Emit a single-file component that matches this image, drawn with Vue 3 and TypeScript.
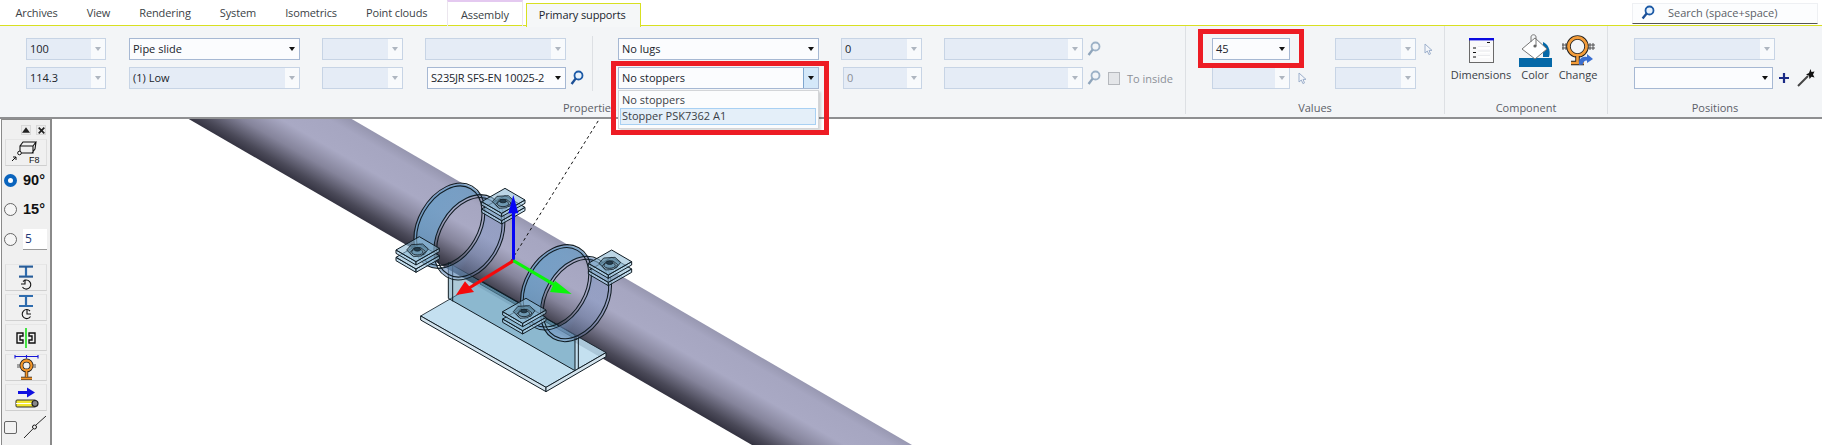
<script setup lang="ts">
function ell(cx: number, cy: number, rx: number, ry: number, rot: number): string {
  const a = (rot * Math.PI) / 180
  const dx = rx * Math.cos(a)
  const dy = rx * Math.sin(a)
  return `M${cx + dx} ${cy + dy}A${rx} ${ry} ${rot} 1 0 ${cx - dx} ${cy - dy}A${rx} ${ry} ${rot} 1 0 ${cx + dx} ${cy + dy}Z`
}
const ringA = { cx: 238, cy: 197 }
const ringB = { cx: 298, cy: 232 }
const bandPath = ell(ringA.cx, ringA.cy, 135, 92, -60) + ell(ringB.cx, ringB.cy, 135, 92, -60)
const rings = [ringA, ringB].flatMap((r) => [
  ell(r.cx, r.cy, 137, 94, -60),
  ell(r.cx, r.cy, 128, 86, -60),
])
const clamps = [
  { t: 'translate(0 0)' },
  { t: 'translate(320 185)' },
]
const lugs = ['translate(78 270)', 'translate(335 125)']
const plates = [22, 0]
const tabs = ['Archives', 'View', 'Rendering', 'System', 'Isometrics', 'Point clouds']
</script>

<template>
  <div class="page">
    <header class="ribbon">
      <nav class="tabstrip">
        <span v-for="t in tabs" :key="t" class="tab">{{ t }}</span>
        <span class="tab assembly">Assembly</span>
        <span class="tab primary">Primary supports</span>
        <div class="search">
          <svg class="search-ico" width="14" height="15" viewBox="0 0 14 15"><circle cx="8.5" cy="5.5" r="4" fill="#e8f2fc" stroke="#1c5aa6" stroke-width="1.8"/><path d="M5.6 8.6 1.6 13.4" stroke="#1c4f96" stroke-width="2.4"/></svg>
          <span>Search (space+space)</span>
        </div>
      </nav>

      <div class="body">
        <section class="group g-props">
          <div class="cols">
            <div class="col c1">
              <div class="combo off"><span class="val">100</span><span class="arr"></span></div>
              <div class="combo off"><span class="val">114.3</span><span class="arr"></span></div>
            </div>
            <div class="col c2">
              <div class="combo"><span class="val">Pipe slide</span><span class="arr"></span></div>
              <div class="combo off"><span class="val">(1) Low</span><span class="arr"></span></div>
            </div>
            <div class="col c3">
              <div class="combo off"><span class="val"></span><span class="arr"></span></div>
              <div class="combo off"><span class="val"></span><span class="arr"></span></div>
            </div>
            <div class="col c4">
              <div class="combo off"><span class="val"></span><span class="arr"></span></div>
              <div class="combo in2 tight"><span class="val">S235JR SFS-EN 10025-2</span><span class="arr"></span></div>
            </div>
            <div class="col c5">
              <span class="ico-slot"></span>
              <span class="ico-slot"><svg width="14" height="16" viewBox="0 0 14 16"><circle cx="8.5" cy="5.5" r="4" fill="#e8f2fc" stroke="#1c5aa6" stroke-width="1.8"/><path d="M5.6 8.6 1.6 14" stroke="#1c4f96" stroke-width="2.4"/></svg></span>
            </div>
            <i class="sep s1"></i>
            <div class="col c6">
              <div class="combo"><span class="val">No lugs</span><span class="arr"></span></div>
              <div class="anchor">
                <div class="combo hot"><span class="val">No stoppers</span><span class="arr"></span></div>
                <div class="menu">
                  <div class="opt">No stoppers</div>
                  <div class="opt sel">Stopper PSK7362 A1</div>
                </div>
                <div class="mark m1"></div>
              </div>
            </div>
            <div class="col c7">
              <div class="combo off"><span class="val">0</span><span class="arr"></span></div>
              <div class="combo off in2 dim"><span class="val">0</span><span class="arr"></span></div>
            </div>
            <div class="col c8">
              <div class="combo off"><span class="val"></span><span class="arr"></span></div>
              <div class="combo off"><span class="val"></span><span class="arr"></span></div>
            </div>
            <div class="col c9">
              <span class="ico-slot"><svg width="14" height="16" viewBox="0 0 14 16"><circle cx="8.5" cy="5.5" r="4" fill="#f2f5f8" stroke="#9db2c7" stroke-width="1.8"/><path d="M5.6 8.6 1.6 14" stroke="#8fa5bb" stroke-width="2.4"/></svg></span>
              <span class="ico-slot inside">
                <svg width="14" height="16" viewBox="0 0 14 16"><circle cx="8.5" cy="5.5" r="4" fill="#f2f5f8" stroke="#9db2c7" stroke-width="1.8"/><path d="M5.6 8.6 1.6 14" stroke="#8fa5bb" stroke-width="2.4"/></svg>
                <i class="chk"></i>
                <span class="inside-txt">To inside</span>
              </span>
            </div>
          </div>
          <div class="glabel lab-props">Properties</div>
        </section>

        <section class="group g-vals">
          <div class="cols">
            <div class="col v1">
              <div class="anchor">
                <div class="combo"><span class="val">45</span><span class="arr"></span></div>
                <div class="mark m2"></div>
              </div>
              <div class="with-cur">
                <div class="combo off"><span class="val"></span><span class="arr"></span></div>
                <svg class="cursor" width="9" height="13" viewBox="0 0 9 13"><path d="M1 1v9l2.3-2 1.6 3.6 1.6-.7L5 7.4h3z" fill="#f4f6fa" stroke="#9db0cc"/></svg>
              </div>
            </div>
            <div class="col v2">
              <div class="with-cur">
                <div class="combo off"><span class="val"></span><span class="arr"></span></div>
                <svg class="cursor" width="9" height="13" viewBox="0 0 9 13"><path d="M1 1v9l2.3-2 1.6 3.6 1.6-.7L5 7.4h3z" fill="#f4f6fa" stroke="#9db0cc"/></svg>
              </div>
              <div class="combo off"><span class="val"></span><span class="arr"></span></div>
            </div>
          </div>
          <div class="glabel">Values</div>
        </section>

        <section class="group g-comp">
          <div class="tools">
            <div class="tool t-dim">
              <span class="tool-ico">
                <svg width="25" height="25" viewBox="0 0 25 25"><rect x=".5" y=".5" width="24" height="24" fill="#f9f9fa" stroke="#6a6a6a"/><rect x="0" y="0" width="25" height="2.4" fill="#0a0ae0"/><path d="M18 4.5h3M4 10h3M4 14.500h3M4 19h3" stroke="#111" stroke-width="1.200"/><path d="M9 10h12M9 14.500h12M9 19h12" stroke="#fff" stroke-width="1.500"/><path d="M9 8.500h12M9 13h12M9 17.500h12" stroke="#e4e6ea" stroke-width=".8"/></svg>
              </span>
              <span class="tool-txt">Dimensions</span>
            </div>
            <div class="tool t-col">
              <span class="tool-ico">
                <svg width="33" height="33" viewBox="0 0 33 33"><rect x="0" y="24" width="33" height="9" fill="#0468a8"/><path d="M24 8c5 2 8 8 6 15h-6z" fill="#0468a8"/><path d="M16 4 28 15 16 25 3 15z" fill="#fff" stroke="#777"/><path d="M12 8V3c0-3 5-3 5 0v9" fill="none" stroke="#777"/><circle cx="16" cy="12" r="1.600" fill="#666"/></svg>
              </span>
              <span class="tool-txt">Color</span>
            </div>
            <div class="tool t-chg">
              <span class="tool-ico">
                <svg width="33" height="31" viewBox="0 0 33 31"><path d="M1 8v7M4 8v7M0 10h6M0 13h6M28 8v7M31 8v7M26 10h7M26 13h7" stroke="#444" stroke-width=".9"/><circle cx="15.500" cy="11.500" r="9" fill="none" stroke="#222" stroke-width="4.500"/><circle cx="15.500" cy="11.500" r="9" fill="none" stroke="#f39c3a" stroke-width="2.800"/><path d="M15.500 21v6M9 28h13" stroke="#222" stroke-width="4.500"/><path d="M15.500 21v6M9 28h13" stroke="#f39c3a" stroke-width="2.600"/><path d="M17 30c-1-6 3-9 8-8v-3l6 5-6 4v-2.500c-3 0-4 2-4 4z" fill="#3b6fd0"/></svg>
              </span>
              <span class="tool-txt">Change</span>
            </div>
          </div>
          <div class="glabel">Component</div>
        </section>

        <section class="group g-pos">
          <div class="cols">
            <div class="col p1">
              <div class="combo off"><span class="val"></span><span class="arr"></span></div>
              <div class="pos-row">
                <div class="combo short"><span class="val"></span><span class="arr"></span></div>
                <svg class="plus" width="10" height="10" viewBox="0 0 10 10"><path d="M5 0v10M0 5h10" stroke="#1a2a86" stroke-width="2.200"/></svg>
                <svg class="wand" width="18" height="18" viewBox="0 0 18 18"><path d="M1 17 11 7" stroke="#444" stroke-width="2"/><path d="M13.500 0l1 3 3-.5-1.500 3 1.500 3-3-.8-2 2.300-.5-3.300-3-1.200 3-1.500z" fill="#111"/></svg>
              </div>
            </div>
          </div>
          <div class="glabel">Positions</div>
        </section>
      </div>
    </header>

    <main class="view">
      <svg class="scene" width="1822" height="326" viewBox="0 119 1822 326">
        <defs>
          <linearGradient id="pipe" gradientUnits="userSpaceOnUse" x1="187" y1="118" x2="228" y2="47">
            <stop offset="0" stop-color="#353442"/>
            <stop offset=".1" stop-color="#4a4958"/>
            <stop offset=".32" stop-color="#85849b"/>
            <stop offset=".56" stop-color="#a9a9c4"/>
            <stop offset=".85" stop-color="#a6a6c1"/>
            <stop offset="1" stop-color="#9595ae"/>
          </linearGradient>
          <linearGradient id="band" gradientUnits="userSpaceOnUse" x1="150" y1="150" x2="400" y2="290">
            <stop offset="0" stop-color="#6f9ec6" stop-opacity=".9"/>
            <stop offset=".45" stop-color="#739dc4" stop-opacity=".85"/>
            <stop offset=".7" stop-color="#7a93c4" stop-opacity=".4"/>
            <stop offset="1" stop-color="#7a93c4" stop-opacity=".4"/>
          </linearGradient>
        </defs>
        <polygon points="187,118 350,118 912,445 752,445" fill="url(#pipe)"/>
        <line x1="511" y1="261" x2="600" y2="118" stroke="#111" stroke-width="1" stroke-dasharray="3 3"/>
        <g transform="translate(370 160) scale(.33333)" stroke="#101c24" stroke-width="3" stroke-linejoin="round">
          <polygon points="152,468 332,364 708,578 528,682" fill="#bcdcee" fill-opacity=".88" stroke-width="2.500"/>
          <polygon points="152,468 528,682 528,695 152,480" fill="#d4e4ee"/>
          <polygon points="528,682 708,578 708,590 528,695" fill="#d4e4ee"/>
          <polygon points="330,360 620,527 620,539 330,372" fill="#2a4555" fill-opacity=".55" stroke-width="2"/>
          <polygon points="235,308 615,525 615,632 235,415" fill="#4a87a6" fill-opacity=".45"/>
          <path d="M248 318V424M625 530V626" fill="none"/>
          <g v-for="c in clamps" :key="c.t" :transform="c.t">
            <path :d="bandPath" fill="url(#band)" fill-rule="evenodd" stroke="none"/>
            <path v-for="r in rings" :key="r" :d="r" fill="none" stroke-width="3.200"/>
            <g v-for="l in lugs" :key="l" :transform="l">
              <g v-for="y in plates" :key="y" :transform="`translate(0 ${y})`">
                <polygon points="0,0 60,35 60,45 0,10" fill="#a9cfe6" fill-opacity=".7"/>
                <polygon points="60,35 130,-5 130,5 60,45" fill="#a9cfe6" fill-opacity=".7"/>
                <polygon points="0,0 70,-40 130,-5 60,35" fill="#8fbbd6" fill-opacity=".6"/>
              </g>
              <polygon points="32,0 46,-16 80,-18 97,-3 84,14 48,16" fill="#4f7890" fill-opacity=".6" stroke-width="2.400"/>
              <polygon points="42,8 54,-6 74,-7 88,4 76,18 52,20" fill="#a9c8dc" fill-opacity=".6" stroke-width="2.400"/>
              <ellipse cx="64" cy="6" rx="17" ry="9" fill="#5f8ba6" fill-opacity=".7" stroke-width="2.400"/>
              <ellipse cx="64" cy="-2" rx="10" ry="5.500" fill="#243c4c" stroke-width="2"/>
            </g>
          </g>
          <g stroke="none">
            <rect x="426" y="155" width="9" height="147" fill="#0606f5"/>
            <polygon points="430,105 415,160 445,160" fill="#0606f5"/>
            <polygon points="428,298 433,306 300,388 295,380" fill="#f50a0a"/>
            <polygon points="258,405 285,364 312,396" fill="#f50a0a"/>
            <polygon points="432,298 428,306 560,384 565,376" fill="#0af50a"/>
            <polygon points="605,402 555,362 540,396" fill="#0af50a"/>
          </g>
        </g>
      </svg>

      <aside class="palette">
        <div class="pal-top">
          <span class="mini"><svg width="9" height="6" viewBox="0 0 9 6"><path d="M4.500 0 9 6H0z" fill="#222"/></svg></span>
          <span class="mini"><svg width="7" height="7" viewBox="0 0 7 7"><path d="M.7.7l5.600 5.600M6.300.7.700 6.300" stroke="#222" stroke-width="1.700"/></svg></span>
        </div>
        <button class="pbtn b-f8">
          <svg width="42" height="26" viewBox="0 0 42 26"><path d="M15 6h13v7H15zM15 6l3-4h13l-3 4M31 2l-1 7-3 4" fill="none" stroke="#111" stroke-width="1.100"/><circle cx="14.500" cy="13" r="1.800" fill="#fff" stroke="#111"/><path d="M7 21l4-4M8 17h3v3" fill="none" stroke="#111"/><text x="24" y="23" class="f8">F8</text></svg>
        </button>
        <label class="radio r90"><i class="dot on"></i><b>90°</b></label>
        <label class="radio r15"><i class="dot"></i><b>15°</b></label>
        <label class="radio r5"><i class="dot"></i><span class="num">5</span></label>
        <button class="pbtn first">
          <svg width="42" height="27" viewBox="0 0 42 27"><path d="M14 2.500h14M14 12.500h14M21 2.500v10" fill="none" stroke="#2f6cae" stroke-width="2.200"/><path d="M14 3h14M14 13h14" stroke="#1a3a66" stroke-width=".6"/><path d="M18 17.500a4.500 4.500 0 1 1-.5 5.500" fill="none" stroke="#111" stroke-width="1.100"/><path d="M20 15.500v4.500h-4" fill="none" stroke="#111" stroke-width="1.100"/></svg>
        </button>
        <button class="pbtn">
          <svg width="42" height="27" viewBox="0 0 42 27"><path d="M14 2h14M14 12h14M21 2v10" fill="none" stroke="#2f6cae" stroke-width="2.200"/><path d="M25 17a4.500 4.500 0 1 0 .5 5.500" fill="none" stroke="#111" stroke-width="1.100"/><path d="M22 15.500v4.500h4" fill="none" stroke="#111" stroke-width="1.100"/></svg>
        </button>
        <button class="pbtn">
          <svg width="42" height="27" viewBox="0 0 42 27"><path d="M21 4v20" stroke="#18e018" stroke-width="1.600"/><path d="M18 9h-6v10h6v-3h-3v-4h3zM24 9h6v10h-6v-3h3v-4h-3z" fill="none" stroke="#111" stroke-width="1.400"/></svg>
        </button>
        <button class="pbtn">
          <svg width="42" height="27" viewBox="0 0 42 27"><path d="M10 2.500h23M10 .5v4M21.500 .5v4M33 .5v4" stroke="#1414d8" stroke-width="1.100"/><path d="M12 11h3M28 11h3M12 13h3M28 13h3" stroke="#555"/><circle cx="21.500" cy="11.500" r="5" fill="none" stroke="#222" stroke-width="3.800"/><circle cx="21.500" cy="11.500" r="5" fill="none" stroke="#f3962a" stroke-width="2.300"/><path d="M21.500 17v6M16 24.500h11" stroke="#222" stroke-width="3.400"/><path d="M21.500 17v6M16 24.500h11" stroke="#f3962a" stroke-width="2"/></svg>
        </button>
        <button class="pbtn">
          <svg width="42" height="27" viewBox="0 0 42 27"><path d="M13 7h9V3.500l8 5-8 5V10h-9z" fill="#1010e0"/><rect x="11" y="16" width="20" height="7" rx="1" fill="#f2e62c" stroke="#333"/><path d="M11 19.500h20" stroke="#fff"/><circle cx="30" cy="19.500" r="3" fill="#888" stroke="#222" stroke-width="1.200"/></svg>
        </button>
        <div class="pal-foot">
          <i class="fchk"></i>
          <svg width="22" height="22" viewBox="0 0 22 22"><path d="M0 22 9 12.800M12 9 22 0" stroke="#111" stroke-width=".9"/><circle cx="10.500" cy="11" r="2" fill="none" stroke="#111"/></svg>
        </div>
      </aside>
    </main>
  </div>
</template>

<style>
html, body { margin: 0; background: #fff; }
</style>

<style scoped>
.page { width: 1822px; height: 445px; overflow: hidden; font-family: "Open Sans", "Liberation Sans", sans-serif; font-size: 11px; color: #20242c; background: #fff; }
.ribbon { height: 119px; box-sizing: border-box; background: #f3f5f7; border-bottom: 2px solid #8e8f91; position: relative; z-index: 2; }
.tabstrip { height: 26px; box-sizing: border-box; display: flex; align-items: flex-end; background: #fff; border-bottom: 1.500px solid #d8e021; position: relative; padding-left: 1px; letter-spacing: -.12px; }
.tab { box-sizing: border-box; height: 24px; padding: 0 14.500px; line-height: 24px; color: #3b3f46; white-space: nowrap; }
.assembly { margin-left: 5px; padding: 0 13px; height: 26px; line-height: 26px; border-top: 2px solid #e4c9f0; border-left: 1px solid #ebe6ee; border-right: 1px solid #ebe6ee; color: #3b3f46; margin-bottom: -1px; }
.primary { margin-left: 3px; padding: 0 14px 0 12px; height: 24px; line-height: 21px; background: #f5f7f8; border: 1.500px solid #d8e021; border-bottom: none; margin-bottom: -1.500px; color: #20242c; position: relative; z-index: 1; }
.search { position: absolute; left: 1632px; top: 3px; width: 186px; height: 21px; box-sizing: border-box; display: flex; align-items: center; padding-bottom: 2px; background: #fcfdfe; border: 1px solid #eef0f3; border-bottom: 1px solid #555; color: #5b5f66; letter-spacing: 0; }
.search-ico { margin: 0 13px 0 8px; }
.body { display: flex; height: 90px; }
.group { position: relative; height: 88px; box-sizing: border-box; padding-top: 12px; flex: none; }
.g-props { width: 1186px; border-right: 1px solid #dde0e4; }
.g-vals { width: 259px; border-right: 1px solid #dde0e4; }
.g-comp { width: 163px; border-right: 1px solid #dde0e4; }
.g-pos { width: 214px; }
.cols { display: flex; }
.col { display: flex; flex-direction: column; gap: 7px; flex: none; }
.combo { box-sizing: border-box; height: 22px; width: 100%; display: flex; align-items: stretch; background: #fbfcfe; border: 1px solid #a6b8d3; }
.val { flex: 1; min-width: 0; padding-left: 3px; line-height: 20px; white-space: nowrap; color: #20242c; }
.arr { width: 14px; flex: none; position: relative; }
.arr::after { content: ""; position: absolute; left: 4px; top: 8px; border: 3px solid transparent; border-top: 4px solid #111; border-bottom: none; }
.off { background: #e5ecf6; border-color: #c7d4e5; }
.off .arr { background: #f8fafc; }
.off .arr::after { border-top-color: #aeb6c0; }
.dim .val { color: #8b8f96; }
.in2 { margin-left: 2px; width: calc(100% - 2px); }
.tight .val { letter-spacing: -.2px; }
.hot { background: #fbfcfe; }
.hot .arr { background: #d4e8f9; border-left: 1px solid #7fa6cf; }
.c1 { margin-left: 26px; width: 80px; }
.c2 { margin-left: 23px; width: 171px; }
.c3 { margin-left: 22px; width: 81px; }
.c4 { margin-left: 22px; width: 141px; }
.c5 { margin-left: 4px; width: 14px; }
.s1 { display: block; width: 1px; height: 55px; background: #dde0e4; margin: -2px 25px 0 8px; flex: none; }
.c6 { width: 201px; }
.c7 { margin-left: 22px; width: 81px; }
.c8 { margin-left: 22px; width: 139px; }
.c9 { margin-left: 4px; }
.ico-slot { height: 22px; display: flex; align-items: center; }
.inside { gap: 7px; }
.chk { display: block; width: 12px; height: 13px; box-sizing: border-box; background: #e4e6e9; border: 1px solid #b5b8bd; }
.inside-txt { color: #8c9098; margin-left: 0; white-space: nowrap; }
.anchor { position: relative; }
.menu { position: absolute; left: 0; right: 0; top: 23px; height: 39px; box-sizing: border-box; padding: 1px; background: #fbfcfd; border: 1px solid #d3d5d8; box-shadow: 2px 2px 2px rgba(0,0,0,.15); z-index: 3; }
.opt { height: 16px; line-height: 15px; padding-left: 2px; color: #3a3e46; box-sizing: border-box; }
.opt.sel { height: 17px; background: #e4eff9; border: 1px solid #a8d0f3; margin-right: 1px; padding-left: 1px; line-height: 14px; }
.mark { position: absolute; border: 5px solid #ed1c24; pointer-events: none; z-index: 4; }
.m1 { left: -7px; right: -10px; top: -6px; bottom: -46px; }
.m2 { left: -14px; right: -14px; top: -9px; bottom: -8px; }
.glabel { position: absolute; left: 0; right: 0; top: 74px; text-align: center; color: #5c6068; line-height: 16px; }
.lab-props { left: 563px; right: auto; width: 50px; }
.g-vals .cols { padding-left: 26px; }
.v1 { width: 78px; }
.v2 { margin-left: 45px; width: 81px; }
.with-cur { position: relative; }
.cursor { position: absolute; left: calc(100% + 8px); top: 5px; }
.tools { display: flex; height: 52px; position: relative; }
.tool { position: absolute; top: 0; display: flex; flex-direction: column; align-items: center; }
.tool-ico { height: 33px; display: flex; align-items: center; margin-top: -4px; }
.tool-txt { line-height: 16px; margin-top: 0; color: #3a3e46; white-space: nowrap; }
.t-dim { left: 6px; width: 60px; }
.t-col { left: 70px; width: 40px; }
.t-chg { left: 112px; width: 42px; }
.g-pos .cols { padding-left: 26px; }
.p1 { width: 141px; }
.pos-row { display: flex; align-items: center; width: 190px; }
.short { width: 139px; flex: none; }
.plus { margin-left: 6px; flex: none; }
.wand { margin-left: 8px; flex: none; }
.view { position: relative; height: 326px; }
.scene { display: block; }
.palette { position: absolute; left: 1px; top: 0; width: 51px; height: 330px; box-sizing: border-box; padding: 5px 3px 0; background: #f0f0f0; border: 1px solid #8a8a8a; border-right: 2px solid #8a8a8a; display: flex; flex-direction: column; z-index: 1; }
.pal-top { display: flex; justify-content: flex-end; gap: 5px; height: 10px; margin-right: 1px; }
.mini { width: 10px; height: 10px; display: flex; align-items: center; justify-content: center; background: #ececec; border: 1px solid #d8d8d8; box-sizing: border-box; }
.pbtn { display: block; width: 42px; height: 27px; padding: 0; margin: 3px 0 0; background: #f0f0f0; border: 1px solid #dedede; border-bottom: 1px solid #cfcfcf; border-top-color: #e6e6e6; box-sizing: border-box; overflow: hidden; flex: none; }
.pbtn svg { display: block; margin: -1px; }
.b-f8 { margin-top: 4px; }
.f8 { font: 9px "Liberation Sans", sans-serif; fill: #111; }
.radio { display: flex; align-items: center; height: 22px; flex: none; }
.radio b { font: bold 14.500px "Liberation Sans", sans-serif; margin-left: 6px; color: #111; }
.r90 { margin-top: 3px; }
.r15 { margin-top: 7px; }
.r5 { margin-top: 8px; }
.dot { display: block; width: 13px; height: 13px; box-sizing: border-box; border-radius: 50%; border: 1px solid #666; background: #f6f6f6; flex: none; margin-left: -1px; }
.dot.on { border: 4px solid #0a64bd; background: #fff; }
.num { display: block; width: 24px; height: 21px; margin-left: 6px; background: #fff; border-bottom: 1px solid #9a9a9a; font-size: 12px; line-height: 20px; padding-left: 2px; box-sizing: border-box; color: #1f3a78; }
.first { margin-top: 14px; }
.pal-foot { display: flex; align-items: center; margin-top: 5px; gap: 7px; }
.fchk { display: block; width: 13px; height: 13px; margin-left: -1px; border: 1px solid #666; border-radius: 2px; box-sizing: border-box; background: #f2f2f2; }
</style>
